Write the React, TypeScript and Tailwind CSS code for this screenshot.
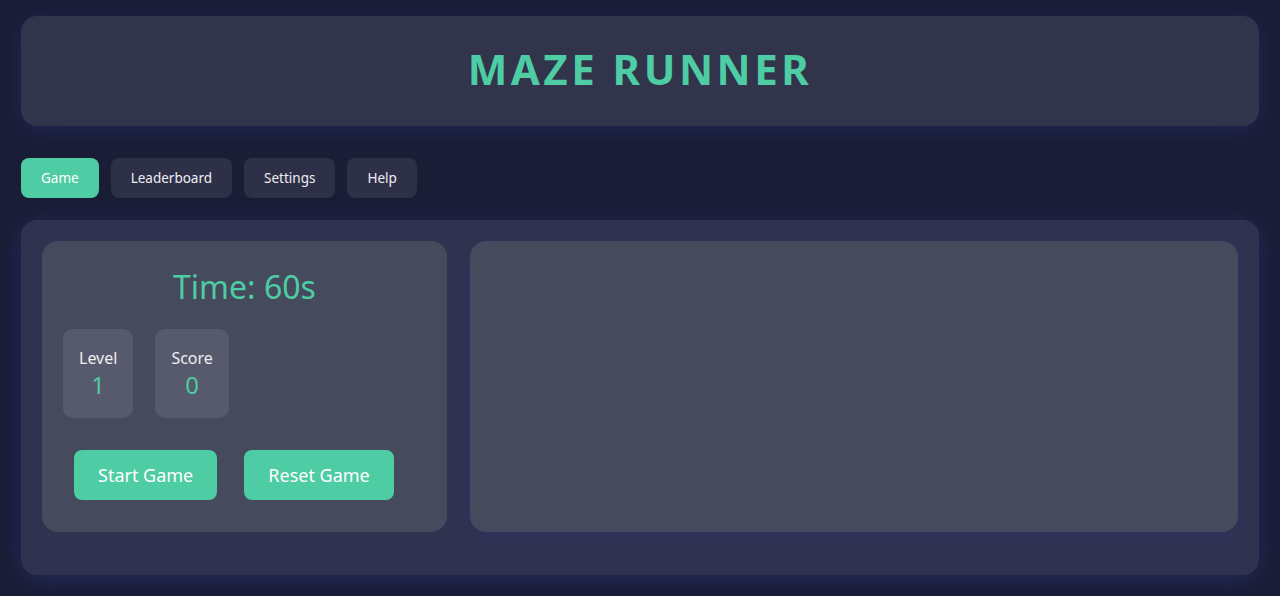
import { useState } from "react";

const tabs = ["Game", "Leaderboard", "Settings", "Help"];

function StatBox({ label, value }: { label: string; value: number }) {
  return (
    <div className="flex flex-col items-center rounded-[10px] bg-[#575a6c] px-4 pt-[18px] pb-[17px]">
      <span className="text-[16px] leading-[22px] text-[#eeeef2]">{label}</span>
      <span className="text-[24px] leading-[32px] text-[#4ecca3]">{value}</span>
    </div>
  );
}

export default function App() {
  const [active, setActive] = useState("Game");
  const [time] = useState(60);
  const [level] = useState(1);
  const [score] = useState(0);

  return (
    <div className="min-h-[596px] bg-[#1a1d36] px-[21px] pt-4 pb-5 font-['Noto_Sans',sans-serif] text-white">
      <header className="flex h-[110px] items-center justify-center rounded-2xl bg-[#31344a] pb-[6px] shadow-[0_4px_20px_rgba(40,50,120,0.45)]">
        <h1 className="text-[42px] font-bold tracking-[3.5px] text-[#4ecca3]">MAZE RUNNER</h1>
      </header>

      <nav className="mt-8 flex gap-3">
        {tabs.map((t) => (
          <button
            key={t}
            type="button"
            onClick={() => setActive(t)}
            className={`h-10 rounded-lg px-[20px] text-[13.5px] ${
              active === t ? "bg-[#4ecca3] text-white" : "bg-[#2e3047] text-[#eeeef2]"
            }`}
          >
            {t}
          </button>
        ))}
      </nav>

      <main className="mt-[22px] flex gap-[23px] rounded-2xl bg-[#30334f] p-[21px] pb-[43px] shadow-[0_4px_24px_rgba(45,55,130,0.5)]">
        <section className="flex h-[291px] w-[405px] shrink-0 flex-col rounded-2xl bg-[#464a5d] p-[21px]">
          <div className="mt-[3px] text-center text-[32px] leading-[44px] text-[#4ecca3]">Time: {time}s</div>
          <div className="mt-[20px] flex gap-[22px]">
            <StatBox label="Level" value={level} />
            <StatBox label="Score" value={score} />
          </div>
          <div className="mt-[32px] ml-[11px] flex gap-[27px]">
            <button type="button" className="h-[50px] rounded-lg bg-[#4ecca3] px-[24px] text-[18px] text-white">
              Start Game
            </button>
            <button type="button" className="h-[50px] rounded-lg bg-[#4ecca3] px-[24px] text-[18px] text-white">
              Reset Game
            </button>
          </div>
        </section>
        <section className="h-[291px] flex-1 rounded-2xl bg-[#454a5d] shadow-[0_4px_16px_rgba(40,50,130,0.35)]" />
      </main>
    </div>
  );
}
